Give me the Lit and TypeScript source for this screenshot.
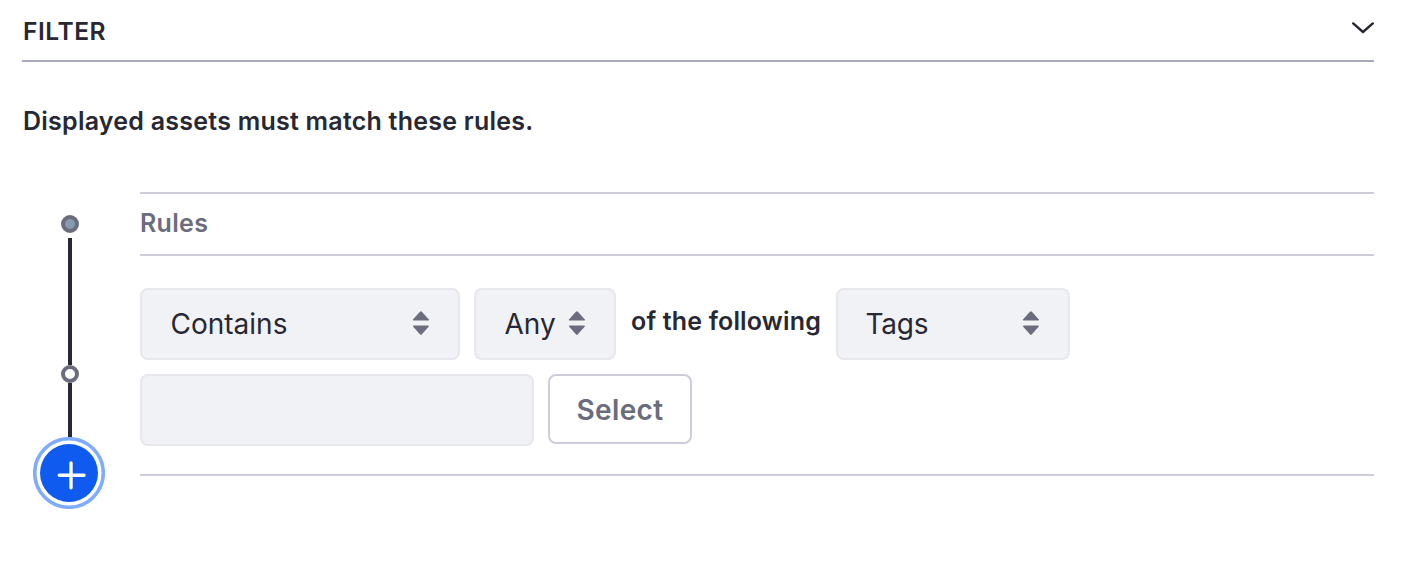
import { LitElement, html, css } from "lit";
import { customElement } from "lit/decorators.js";

@customElement("select-box")
class SelectBox extends LitElement {
  static styles = css`
    :host { display: block; box-sizing: border-box; height: 72px; }
    .box {
      box-sizing: border-box; height: 72px; display: flex; align-items: center;
      justify-content: space-between; padding: 0 27.7px 0 28.5px;
      background: #f1f2f5; border: 2px solid #e7e7ed; border-radius: 8px;
      font-size: 28px; line-height: 40px; color: #272833; white-space: nowrap;
    }
    :host(.tags) .box { padding-left: 27.5px; letter-spacing: -.2px; }
    .caret { display: block; width: 18px; height: 26px; margin-bottom: 2px; fill: #6b6c7e; }
  `;
  render() {
    return html`<div class="box">
      <span><slot></slot></span>
      <svg class="caret" viewBox="0 0 18 26">
        <path d="M1.7 10.6H16.1Q17.5 10.4 16.6 9.2L9.9 1.8Q8.9 .8 7.9 1.8L1.2 9.2Q.3 10.4 1.7 10.6Z" />
        <path d="M1.7 15.4H16.1Q17.5 15.6 16.6 16.8L9.9 24.2Q8.9 25.2 7.9 24.2L1.2 16.8Q.3 15.6 1.7 15.4Z" />
      </svg>
    </div>`;
  }
}

@customElement("app-root")
class AppRoot extends LitElement {
  static styles = css`
    :host {
      display: block; box-sizing: border-box; height: 588px; overflow: hidden;
      padding: 0 30px 0 22px; background: #fff; color: #272833;
      font-family: Inter, "Liberation Sans", sans-serif;
    }
    .header {
      box-sizing: border-box; height: 62px; border-bottom: 2px solid #a7a9bc;
      display: flex; justify-content: space-between; align-items: flex-start;
    }
    .title { margin: 16px 0 0 1px; font-size: 24.5px; line-height: 30px; font-weight: 600; letter-spacing: .55px; }
    .chevron { display: block; width: 24px; height: 14px; margin-top: 21px; }
    .intro { margin: 44px 0 0 1px; font-size: 25px; line-height: 30px; font-weight: 600; letter-spacing: .24px; }
    .content { display: flex; margin-top: 56px; }
    .timeline { width: 96px; flex: none; display: flex; flex-direction: column; align-items: center; margin: 23px 22px 0 0; }
    .dot { box-sizing: border-box; width: 18px; height: 18px; border: 4px solid #6b6c7e; border-radius: 50%; background: #fff; }
    .dot.start { background: #869cad; }
    .line { width: 4px; background: #272833; }
    .first { height: 127px; margin-top: 5px; }
    .second { height: 54px; }
    .add { display: block; width: 72px; height: 72px; margin-left: -2px; }
    .rules { flex: 1; border-top: 2px solid #cdced9; border-bottom: 2px solid #cdced9; box-sizing: border-box; height: 284px; }
    .caption {
      box-sizing: border-box; height: 62px; padding-top: 14px; border-bottom: 2px solid #cdced9;
      font-size: 25px; line-height: 30px; font-weight: 600; color: #6b6c7e; letter-spacing: .3px;
    }
    .row { display: flex; align-items: flex-start; }
    .conditions { margin-top: 32px; }
    .values { margin-top: 14px; gap: 14px; }
    .contains { width: 320px; margin-right: 14px; }
    .any { width: 142px; }
    .tags { width: 234px; }
    .joiner { width: 220px; text-align: center; font-size: 25px; line-height: 30px; margin-top: 18px; font-weight: 600; letter-spacing: .17px; white-space: nowrap; }
    .field { box-sizing: border-box; width: 394px; height: 72px; background: #f1f2f5; border: 2px solid #e7e7ed; border-radius: 8px; }
    .select {
      box-sizing: border-box; width: 144px; height: 70px; margin: 0; padding: 2px 0 0; background: #fff;
      border: 2px solid #cdced9; border-radius: 8px; font: 600 28px/40px Inter, sans-serif; color: #6b6c7e; letter-spacing: .35px;
    }
  `;
  render() {
    return html`
      <div class="header">
        <div class="title">FILTER</div>
        <svg class="chevron" viewBox="0 0 24 14"><path d="M3.2 2.4L13 11L22.8 2.4" fill="none" stroke="#272833" stroke-width="2.4" stroke-linecap="round" stroke-linejoin="round" /></svg>
      </div>
      <div class="intro">Displayed assets must match these rules.</div>
      <div class="content">
        <div class="timeline">
          <div class="dot start"></div>
          <div class="line first"></div>
          <div class="dot"></div>
          <div class="line second"></div>
          <svg class="add" viewBox="0 0 72 72">
            <circle cx="36" cy="36" r="34.3" fill="#fff" stroke="#80acff" stroke-width="3.6" />
            <circle cx="36" cy="36" r="29" fill="#0f5aef" />
            <path d="M26.3 38.2H51M38 26V50.8" stroke="#fff" stroke-width="3.4" stroke-linecap="round" />
          </svg>
        </div>
        <div class="rules">
          <div class="caption">Rules</div>
          <div class="row conditions">
            <select-box class="contains">Contains</select-box>
            <select-box class="any">Any</select-box>
            <span class="joiner">of the following</span>
            <select-box class="tags">Tags</select-box>
          </div>
          <div class="row values">
            <div class="field"></div>
            <button class="select">Select</button>
          </div>
        </div>
      </div>
    `;
  }
}
